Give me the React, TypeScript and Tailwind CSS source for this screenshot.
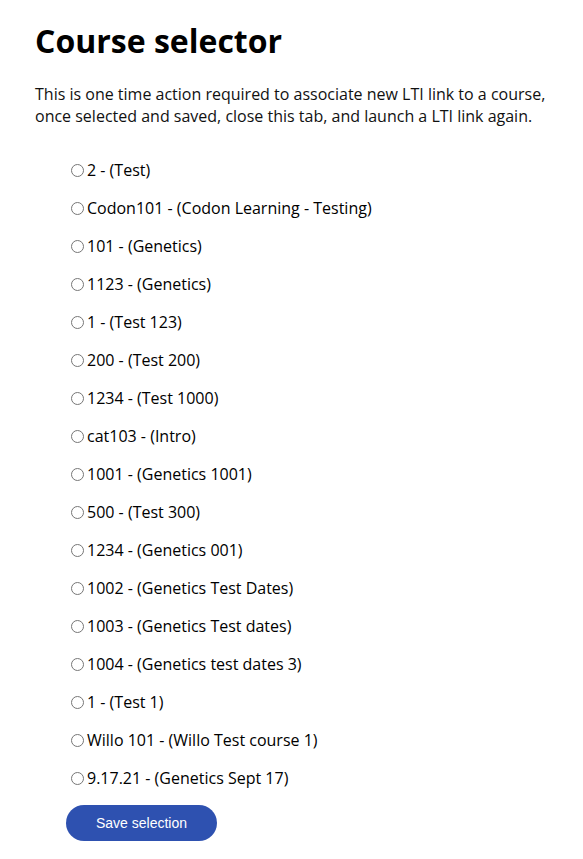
const courses = [
  "2 - (Test)",
  "Codon101 - (Codon Learning - Testing)",
  "101 - (Genetics)",
  "1123 - (Genetics)",
  "1 - (Test 123)",
  "200 - (Test 200)",
  "1234 - (Test 1000)",
  "cat103 - (Intro)",
  "1001 - (Genetics 1001)",
  "500 - (Test 300)",
  "1234 - (Genetics 001)",
  "1002 - (Genetics Test Dates)",
  "1003 - (Genetics Test dates)",
  "1004 - (Genetics test dates 3)",
  "1 - (Test 1)",
  "Willo 101 - (Willo Test course 1)",
  "9.17.21 - (Genetics Sept 17)",
]

export default function App() {
  return (
    <div className="min-h-screen bg-white px-[35px] pt-[19px] text-black [font-family:'Open_Sans',sans-serif]">
      <h1 className="text-[32px] font-bold leading-[44px]">Course selector</h1>
      <p className="mt-[20px] text-[16px] leading-[22px] text-[#111]">
        This is one time action required to associate new LTI link to a course, once selected and saved, close this tab, and launch a LTI link again.
      </p>

      <form className="mt-[24px] pl-[31px]">
        <ul className="flex flex-col">
          {courses.map((c, i) => (
            <li key={i} className="flex h-[38px] items-center">
              <label className="flex items-center text-[16px]">
                <input type="radio" name="course" className="my-0 ml-[5px] mr-[3px] h-[13px] w-[13px]" />
                <span>{c}</span>
              </label>
            </li>
          ))}
        </ul>
        <button
          type="button"
          className="mt-[8px] h-[36px] w-[151px] rounded-full bg-[#2e51b0] text-[14px] text-white [font-family:'Liberation_Sans',Arial,sans-serif]"
        >
          Save selection
        </button>
      </form>
    </div>
  )
}
